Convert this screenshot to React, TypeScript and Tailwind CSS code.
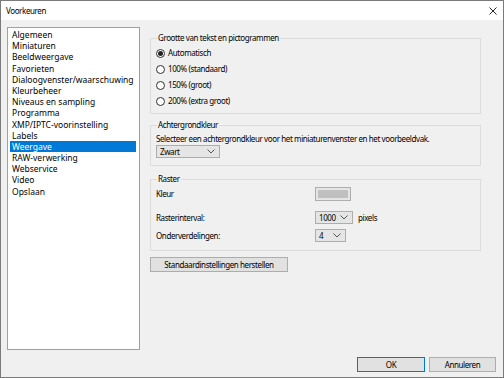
import React from 'react';

const items = [
  'Algemeen',
  'Miniaturen',
  'Beeldweergave',
  'Favorieten',
  'Dialoogvenster/waarschuwing',
  'Kleurbeheer',
  'Niveaus en sampling',
  'Programma',
  'XMP/IPTC-voorinstelling',
  'Labels',
  'Weergave',
  'RAW-verwerking',
  'Webservice',
  'Video',
  'Opslaan',
];

const Chevron: React.FC = () => (
  <svg width="8" height="5" viewBox="0 0 8 5" className="shrink-0">
    <polyline points="0.5,0.5 4,4 7.5,0.5" fill="none" stroke="#555" strokeWidth="1" />
  </svg>
);

const Combo: React.FC<{ value: string; width: string }> = ({ value, width }) => (
  <div className={`flex h-[13px] items-center justify-between border border-[#adadad] bg-[#e5e5e5] pl-[3px] pr-[4px] ${width}`}>
    <span>{value}</span>
    <Chevron />
  </div>
);

const Radio: React.FC<{ label: string; checked?: boolean }> = ({ label, checked }) => (
  <div className="flex h-[16px] items-center gap-[3px]">
    <div className="flex h-[9px] w-[9px] items-center justify-center rounded-full border border-[#333] bg-white">
      {checked && <div className="h-[5px] w-[5px] rounded-full bg-[#222]" />}
    </div>
    <span>{label}</span>
  </div>
);

const Group: React.FC<{ title: string; className?: string; children: React.ReactNode }> = ({ title, className, children }) => (
  <fieldset className={`border border-[#dcdcdc] px-[5px] ${className ?? ''}`}>
    <legend className="ml-[1px] px-[1px] leading-[12px]">{title}</legend>
    {children}
  </fieldset>
);

export default function App() {
  return (
    <div
      className="flex h-[378px] w-[504px] flex-col border border-[#7a7a7a] bg-[#f0f0f0] text-[8px] tracking-[-0.4px] text-black"
      style={{ fontFamily: '"Noto Sans", "Open Sans", sans-serif' }}
    >
      <div className="flex h-[19px] items-center justify-between bg-white pl-[5px] pr-[6px]">
        <span>Voorkeuren</span>
        <svg width="8" height="8" viewBox="0 0 8 8">
          <path d="M0.5 0.5 L7.5 7.5 M7.5 0.5 L0.5 7.5" stroke="#222" strokeWidth="1" />
        </svg>
      </div>

      <div className="flex pl-[6px] pt-[7px]">
        <div className="h-[323px] w-[133px] border border-[#a0a0a0] bg-white px-[2px] pt-[1px] text-[8.5px] tracking-normal">
          {items.map((item) => (
            <div
              key={item}
              className={`mr-[1px] h-[11.2px] px-[2px] leading-[11.2px] whitespace-nowrap ${item === 'Weergave' ? 'bg-[#0078d7] text-white' : ''}`}
            >
              {item}
            </div>
          ))}
        </div>

        <div className="ml-[10px] flex w-[331px] flex-col pt-[5px]">
          <Group title="Grootte van tekst en pictogrammen" className="pt-[1px] pb-[4px]">
            <Radio label="Automatisch" checked />
            <Radio label="100% (standaard)" />
            <Radio label="150% (groot)" />
            <Radio label="200% (extra groot)" />
          </Group>

          <Group title="Achtergrondkleur" className="mt-[5px] pb-[7px] px-[3px]">
            <div className="mt-[2px] leading-[12px] whitespace-nowrap">
              Selecteer een achtergrondkleur voor het miniaturenvenster en het voorbeeldvak.
            </div>
            <Combo value="Zwart" width="w-[64px]" />
          </Group>

          <Group title="Raster" className="mt-[7px] pb-[8px]">
            <div className="grid grid-cols-[159px_auto] items-center">
              <span className="mt-[2px]">Kleur</span>
              <div className="mt-[2px] h-[14px] w-[36px] border border-[#adadad] bg-[#e5e5e5] p-[2px]">
                <div className="h-full w-full bg-[#c0c0c0]" />
              </div>
              <span className="mt-[10px]">Rasterinterval:</span>
              <div className="mt-[10px] flex items-center gap-[5px]">
                <Combo value="1000" width="w-[38px]" />
                <span>pixels</span>
              </div>
              <span className="mt-[5px]">Onderverdelingen:</span>
              <div className="mt-[5px]">
                <Combo value="4" width="w-[31px]" />
              </div>
            </div>
          </Group>

          <div className="mt-[6px] flex h-[15px] w-[138px] items-center justify-center border border-[#adadad] bg-[#e1e1e1]">
            Standaardinstellingen herstellen
          </div>
        </div>
      </div>

      <div className="mt-[7px] flex justify-end gap-[4px] pr-[7px]">
        <div className="flex h-[15px] w-[68px] items-center justify-center border border-[#0078d7] bg-[#e1e1e1]">
          OK
        </div>
        <div className="flex h-[15px] w-[67px] items-center justify-center border border-[#adadad] bg-[#e1e1e1]">
          Annuleren
        </div>
      </div>
    </div>
  );
}
